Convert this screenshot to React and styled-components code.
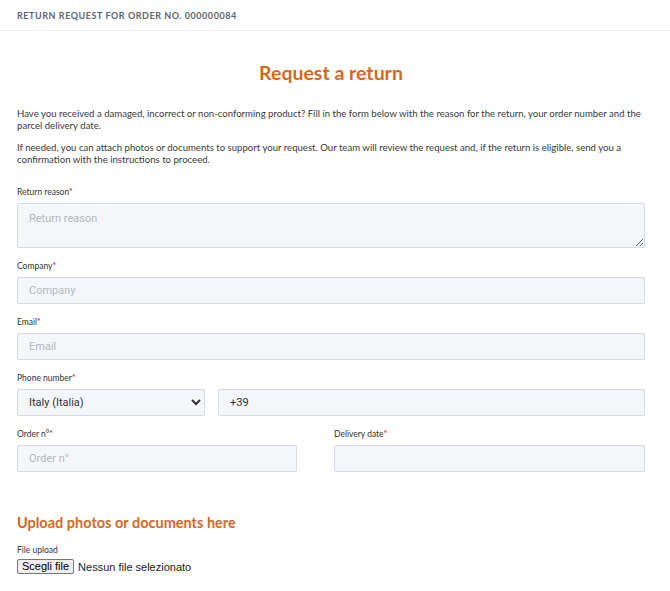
import React from "react";
import styled, { createGlobalStyle } from "styled-components";

const GlobalStyle = createGlobalStyle`
  body {
    margin: 0;
    background: #fff;
    font-family: "Lato", "Noto Sans", sans-serif;
    color: #333;
  }
`;

const Page = styled.div`
  width: 670px;
  box-sizing: border-box;
`;

const TopBar = styled.div`
  height: 31px;
  border-bottom: 1px solid #eef0f2;
  padding: 0 17px;
  display: flex;
  align-items: center;
  font-size: 9px;
  font-weight: 700;
  letter-spacing: 0.55px;
  color: #5c6570;
  box-sizing: border-box;
`;

const Content = styled.div`
  padding: 0 25px 0 17px;
`;

const Title = styled.h1`
  margin: 30px 0 24px;
  text-align: center;
  font-size: 19.5px;
  font-weight: 700;
  color: #d2691f;
`;

const Text = styled.p`
  margin: 0 0 10px;
  font-size: 9.6px;
  line-height: 12px;
  color: #3a3a3a;
`;

const Field = styled.div`
  margin-top: ${(p) => p.$top || 0}px;
  display: flex;
  flex-direction: column;
`;

const Label = styled.label`
  font-size: 8.5px;
  color: #333;
  height: 11px;
  line-height: 11px;
  margin-bottom: 5px;

  span {
    color: #d0021b;
  }
`;

const inputBase = `
  box-sizing: border-box;
  width: 100%;
  background: #f4f6f9;
  border: 1px solid #d5dbe3;
  border-radius: 2px;
  font-family: "Roboto", "Liberation Sans", sans-serif;
  font-size: 11px;
  color: #333;
  padding: 0 11px;
  outline: none;

  &::placeholder {
    color: #b3b8be;
  }
`;

const Input = styled.input`
  ${inputBase}
  height: 27px;
`;

const TextArea = styled.textarea`
  ${inputBase}
  height: 45px;
  padding-top: 8px;
  display: block;
`;

const Select = styled.select`
  ${inputBase}
  height: 27px;
  padding: 0 8px 0 7px;
`;

const Row = styled.div`
  display: grid;
  grid-template-columns: ${(p) => p.$cols};
  column-gap: ${(p) => p.$gap}px;
`;

const SubTitle = styled.h2`
  margin: 42px 0 6px;
  font-size: 14.5px;
  font-weight: 700;
  color: #d2691f;
`;

const FileRow = styled.div`
  margin-top: 3px;
  display: flex;
  align-items: center;
  gap: 4px;
  font-family: "Liberation Sans", Arial, sans-serif;
  font-size: 11px;
  color: #222;
`;

const FileButton = styled.button`
  font-family: "Liberation Sans", Arial, sans-serif;
  font-size: 11px;
  color: #000;
  background: #efefef;
  border: 1px solid #767676;
  border-radius: 2px;
  padding: 0 4px;
  height: 15px;
  line-height: 13px;
`;

const Req = () => <span>*</span>;

export default function App() {
  return (
    <Page>
      <GlobalStyle />
      <TopBar>RETURN REQUEST FOR ORDER NO. 000000084</TopBar>
      <Content>
        <Title>Request a return</Title>
        <Text>
          Have you received a damaged, incorrect or non-conforming product? Fill in the form below with the reason for the return, your order number and the parcel delivery date.
        </Text>
        <Text>
          If needed, you can attach photos or documents to support your request. Our team will review the request and, if the return is eligible, send you a confirmation with the instructions to proceed.
        </Text>

        <Field $top={21}>
          <Label>Return reason<Req /></Label>
          <TextArea placeholder="Return reason" />
        </Field>

        <Field $top={13}>
          <Label>Company<Req /></Label>
          <Input placeholder="Company" />
        </Field>

        <Field $top={13}>
          <Label>Email<Req /></Label>
          <Input placeholder="Email" />
        </Field>

        <Field $top={13}>
          <Label>Phone number<Req /></Label>
          <Row $cols="188px 1fr" $gap={13}>
            <Select defaultValue="it">
              <option value="it">Italy (Italia)</option>
            </Select>
            <Input defaultValue="+39" />
          </Row>
        </Field>

        <Row $cols="280px 1fr" $gap={37}>
          <Field $top={13}>
            <Label>Order n°<Req /></Label>
            <Input placeholder="Order n°" />
          </Field>
          <Field $top={13}>
            <Label>Delivery date<Req /></Label>
            <Input />
          </Field>
        </Row>

        <SubTitle>Upload photos or documents here</SubTitle>
        <Label>File upload</Label>
        <FileRow>
          <FileButton type="button">Scegli file</FileButton>
          Nessun file selezionato
        </FileRow>
      </Content>
    </Page>
  );
}
